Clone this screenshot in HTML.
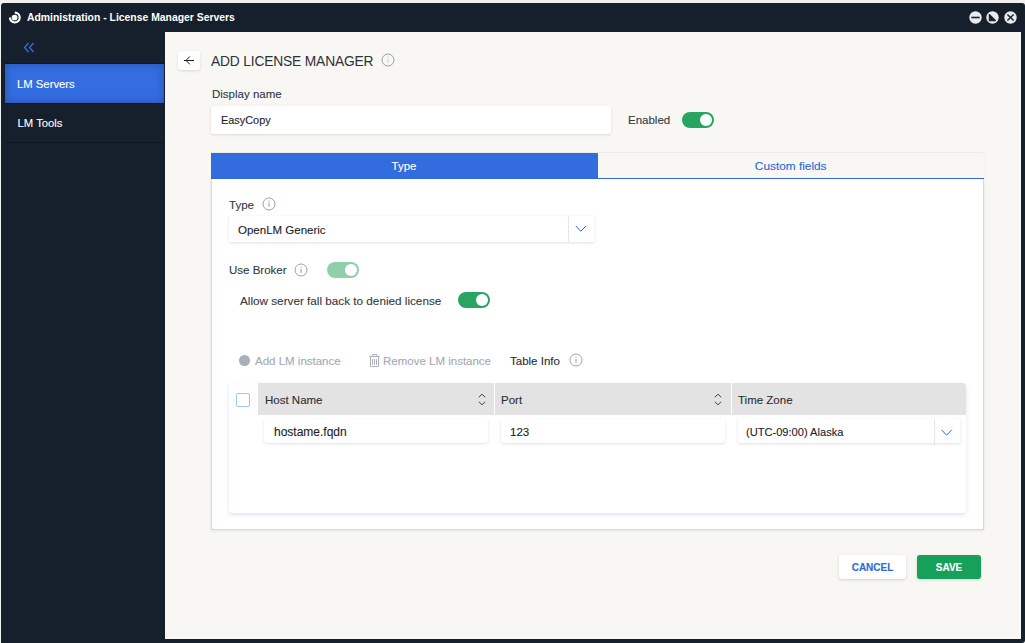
<!DOCTYPE html>
<html><head><meta charset="utf-8">
<style>
*{box-sizing:border-box;margin:0;padding:0}
html,body{width:1025px;height:643px;overflow:hidden;background:#f1f0ec;font-family:"Liberation Sans",sans-serif;}
.abs{position:absolute}
#win{position:absolute;left:1px;top:3px;width:1024px;height:640px;background:#16202c;border-radius:3px;}
#title{position:absolute;left:26px;top:8px;color:#fff;font-weight:bold;font-size:10.4px;line-height:14px;white-space:nowrap}
#logo{position:absolute;left:6px;top:7px;width:16px;height:16px}
.wbtn{position:absolute;top:11px;width:13px;height:13px;border-radius:50%;background:#e8e9eb}
#content{position:absolute;left:165px;top:32px;width:856px;height:607px;background:#f8f7f4}
.side-item{position:absolute;left:5px;width:159px;color:#fff;font-size:12px}
.t{position:absolute;white-space:nowrap;font-size:12px;line-height:14px;color:#2b2f33;-webkit-text-stroke:0.1px currentColor}
.shadow{box-shadow:0 1px 3px rgba(0,0,0,0.12)}
.toggle{position:absolute;width:32px;height:16px;border-radius:8px;background:#27a561}
.toggle::after{content:"";position:absolute;right:2.3px;top:2px;width:12px;height:12px;border-radius:50%;background:#fff}
.info{position:absolute;width:12px;height:12px;border:1px solid #9aa3ad;border-radius:50%}
.info::before{content:"";position:absolute;left:4.5px;top:2px;width:1px;height:1px;background:#9aa3ad}
.info::after{content:"";position:absolute;left:4.5px;top:4px;width:1px;height:4.5px;background:#9aa3ad}
</style></head><body>
<div id="win">
  <svg id="logo" viewBox="0 0 16 16"><path d="M7.8 2.7 A4.9 4.9 0 1 1 2.9 7.6" fill="none" stroke="#fff" stroke-width="2.2"/><circle cx="7.6" cy="7.5" r="2.85" fill="#fff"/></svg>
  <div id="title">Administration - License Manager Servers</div>
  <svg class="abs" style="left:968px;top:8px" width="13" height="13" viewBox="0 0 13 13"><circle cx="6.5" cy="6.5" r="6.2" fill="#e9eaec"/><path d="M2.3 6.5 H10.7" stroke="#16202c" stroke-width="1.6"/></svg>
  <svg class="abs" style="left:985px;top:8px" width="13" height="13" viewBox="0 0 13 13"><circle cx="6.5" cy="6.5" r="6.2" fill="#e9eaec"/><path d="M3.3 3.3 L9.7 9.7 M3.3 4.3 V9.7 H8.7 Z" stroke="#16202c" stroke-width="1.1" fill="#16202c"/></svg>
  <svg class="abs" style="left:1003px;top:8px" width="13" height="13" viewBox="0 0 13 13"><circle cx="6.5" cy="6.5" r="6.2" fill="#e9eaec"/><path d="M3.4 3.4 L9.6 9.6 M9.6 3.4 L3.4 9.6" stroke="#16202c" stroke-width="1.4"/></svg>
</div>
<!-- sidebar -->
<div class="abs" style="left:1px;top:32px;width:164px;height:611px;background:#16202c"></div>
<svg class="abs" style="left:23.3px;top:42px" width="12" height="11" viewBox="0 0 12 11"><path d="M5.5 1 L1.5 5.5 L5.5 10 M10.5 1 L6.5 5.5 L10.5 10" fill="none" stroke="#3a72e0" stroke-width="1.2"/></svg>
<div class="abs" style="left:5px;top:63px;width:159px;height:1px;background:#12161a"></div><div class="abs" style="left:5px;top:103px;width:159px;height:1px;background:#12161a"></div>
<div class="abs" style="left:5px;top:64px;width:159px;height:39px;background:#336de0;box-shadow:inset 0 0 8px rgba(10,20,60,0.3)"></div>
<div class="t" style="left:17px;top:77px;color:#fff;font-size:11.3px">LM Servers</div>
<div class="t" style="left:17.5px;top:116px;color:#fff;font-size:11.3px">LM Tools</div>
<div class="abs" style="left:5px;top:142px;width:159px;height:1px;background:#12161a"></div>

<div id="content"></div>
<!-- header -->
<div class="abs shadow" style="left:178px;top:51px;width:22px;height:19px;background:#fff;border-radius:3px"></div>
<svg class="abs" style="left:183px;top:56px" width="12" height="10" viewBox="0 0 12 10"><path d="M11 4.5 H0.9 M6.8 0.5 L3 4.5 L6.8 8.3" fill="none" stroke="#1d2024" stroke-width="1"/></svg>
<div class="t" id="h1" style="left:211px;top:52.6px;font-size:13.8px;letter-spacing:-0.17px;line-height:18px;color:#2d3238;-webkit-text-stroke:0">ADD LICENSE MANAGER</div>
<svg class="abs" style="left:381px;top:53.3px" width="14" height="14" viewBox="0 0 14 14"><circle cx="7" cy="7" r="6" fill="none" stroke="#8d97a4" stroke-width="0.9"/><path d="M7 5.8 V9.8 M7 3.6 V4.6" stroke="#c3c9d0" stroke-width="1"/></svg>
<div class="t" style="left:212px;top:87px;font-size:11.5px;color:#33383e">Display name</div>
<div class="abs shadow" style="left:211px;top:106px;width:400px;height:28px;background:#fff;border-radius:3px"></div>
<div class="t" style="left:221px;top:113px;font-size:10.9px;color:#1d2126">EasyCopy</div>
<div class="t" style="left:628px;top:113px;font-size:11.5px;color:#33383e">Enabled</div>
<div class="toggle" style="left:682px;top:112px"></div>
<!-- tabs -->
<div class="abs" style="left:211px;top:153px;width:773px;height:26px;background:#f8f7f3;border-radius:0 3px 0 0;box-shadow:0 -1px 2px rgba(0,0,0,0.06)"></div>
<div class="abs" style="left:211px;top:153px;width:387px;height:26px;background:#336cdf"></div>
<div class="abs" style="left:211px;top:178px;width:773px;height:1px;background:#336cdf"></div>
<div class="t" style="left:210.5px;width:387px;text-align:center;top:159px;font-size:11.5px;color:#fff">Type</div>
<div class="t" style="left:597.7px;width:386px;text-align:center;top:159px;font-size:11.83px;color:#2f67d8">Custom fields</div>
<!-- panel -->
<div class="abs" style="left:211px;top:179px;width:773px;height:351px;background:#fff;border:1px solid #cbd9f2;border-top:none;box-shadow:0 1px 3px rgba(0,0,0,0.08)"></div>
<div class="t" style="left:229px;top:198px;font-size:11.5px;color:#33383e">Type</div>
<svg class="abs" style="left:261.5px;top:196.8px" width="14" height="14" viewBox="0 0 14 14"><circle cx="7" cy="7" r="6" fill="none" stroke="#8d97a4" stroke-width="0.9"/><path d="M7 5.8 V9.8 M7 3.6 V4.6" stroke="#8d97a4" stroke-width="1"/></svg>
<div class="abs shadow" style="left:229px;top:216px;width:365px;height:26px;background:#fff"></div>
<div class="abs" style="left:568px;top:216px;width:1px;height:26px;background:#dfe7f3"></div>
<svg class="abs" style="left:575px;top:225px" width="12" height="8" viewBox="0 0 12 8"><path d="M0.8 1 L5.8 6.2 L11 1" fill="none" stroke="#2f68dc" stroke-width="1"/></svg>
<div class="t" style="left:238px;top:223px;font-size:11.5px;color:#1d2126">OpenLM Generic</div>
<div class="t" style="left:229px;top:263px;font-size:11.5px;color:#33383e">Use Broker</div>
<svg class="abs" style="left:294.3px;top:262.5px" width="14" height="14" viewBox="0 0 14 14"><circle cx="7" cy="7" r="6" fill="none" stroke="#8d97a4" stroke-width="0.9"/><path d="M7 5.8 V9.8 M7 3.6 V4.6" stroke="#8d97a4" stroke-width="1"/></svg>
<div class="toggle" style="left:327px;top:262px;background:#8fd0ab"></div>
<div class="t" style="left:240px;top:294px;font-size:11.72px;color:#33383e">Allow server fall back to denied license</div>
<div class="toggle" style="left:458px;top:292px"></div>
<!-- toolbar -->
<div class="abs" style="left:239px;top:355px;width:10.5px;height:10.5px;border-radius:50%;background:#a9b0b8"></div>
<div class="t" style="left:255px;top:354px;font-size:11.5px;color:#a3aab2">Add LM instance</div>
<svg class="abs" style="left:369px;top:353px" width="12" height="15" viewBox="0 0 12 15"><path d="M0.2 3.4 H10.8 M3.4 3 V1.6 H7.8 V3 M1.5 3.8 V13.6 H9.6 V3.8 M3.5 6.2 V11.8 M5.5 6.2 V11.8 M7.5 6.2 V11.8" fill="none" stroke="#a7afb9" stroke-width="1"/></svg>
<div class="t" style="left:383px;top:354px;font-size:11.5px;color:#a3aab2">Remove LM instance</div>
<div class="t" style="left:510px;top:354px;font-size:11.5px;color:#2b2f33">Table Info</div>
<svg class="abs" style="left:568.9px;top:352.9px" width="14" height="14" viewBox="0 0 14 14"><circle cx="7" cy="7" r="6" fill="none" stroke="#8d97a4" stroke-width="0.9"/><path d="M7 5.8 V9.8 M7 3.6 V4.6" stroke="#8d97a4" stroke-width="1"/></svg>
<!-- table -->
<div class="abs" style="left:229px;top:383px;width:737px;height:130px;background:#fff;border-radius:0 4px 4px 4px;box-shadow:0 2px 4px rgba(50,80,160,0.16)"></div>
<div class="abs" style="left:258px;top:383px;width:708px;height:32px;background:#e3e3e3;border-radius:0 4px 0 0"></div>
<div class="abs" style="left:494px;top:383px;width:1px;height:32px;background:#fff"></div>
<div class="abs" style="left:731px;top:383px;width:1px;height:32px;background:#fff"></div>
<div class="abs" style="left:236px;top:393px;width:14px;height:14px;border:1px solid #a3c6ec;border-radius:2px;background:#fff"></div>
<div class="t" style="left:265px;top:393px;font-size:11.5px;color:#2b2f33">Host Name</div>
<div class="t" style="left:501px;top:393px;font-size:11.5px;color:#2b2f33">Port</div>
<div class="t" style="left:738px;top:393px;font-size:11.5px;color:#2b2f33">Time Zone</div>
<svg class="abs" style="left:477px;top:393px" width="10" height="13" viewBox="0 0 10 13"><path d="M1.8 4.3 L5 1.2 L8.2 4.3 M1.8 8.7 L5 11.8 L8.2 8.7" fill="none" stroke="#3b4046" stroke-width="1"/></svg>
<svg class="abs" style="left:713px;top:393px" width="10" height="13" viewBox="0 0 10 13"><path d="M1.8 4.3 L5 1.2 L8.2 4.3 M1.8 8.7 L5 11.8 L8.2 8.7" fill="none" stroke="#3b4046" stroke-width="1"/></svg>
<div class="abs shadow" style="left:264px;top:419px;width:224px;height:24px;background:#fff;border-radius:3px"></div>
<div class="t" style="left:274px;top:425px;font-size:12px;color:#1d2126">hostame.fqdn</div>
<div class="abs shadow" style="left:501px;top:419px;width:224px;height:24px;background:#fff;border-radius:3px"></div>
<div class="t" style="left:510px;top:425px;font-size:11.5px;color:#1d2126">123</div>
<div class="abs shadow" style="left:738px;top:419px;width:222px;height:24px;background:#fff"></div>
<div class="abs" style="left:934px;top:419px;width:1px;height:26px;background:#dfe7f3"></div>
<svg class="abs" style="left:941px;top:429px" width="12" height="8" viewBox="0 0 12 8"><path d="M0.5 0.8 L5.6 6.2 L10.8 0.8" fill="none" stroke="#2f68dc" stroke-width="1"/></svg>
<div class="t" style="left:746px;top:425px;font-size:11.1px;color:#1d2126">(UTC-09:00) Alaska</div>
<!-- buttons -->
<div class="abs" style="left:839px;top:555px;width:67px;height:24px;background:#fff;border-radius:3px;box-shadow:0 1px 3px rgba(0,0,0,0.15)"></div>
<div class="t" style="left:839px;width:67px;text-align:center;top:561px;font-size:10px;font-weight:bold;color:#2f67d8">CANCEL</div>
<div class="abs" style="left:917px;top:555px;width:64px;height:24px;background:#16a05a;border-radius:3px;box-shadow:0 1px 3px rgba(0,0,0,0.15)"></div>
<div class="t" style="left:917px;width:64px;text-align:center;top:561px;font-size:10px;font-weight:bold;color:#fff">SAVE</div>
</body></html>
